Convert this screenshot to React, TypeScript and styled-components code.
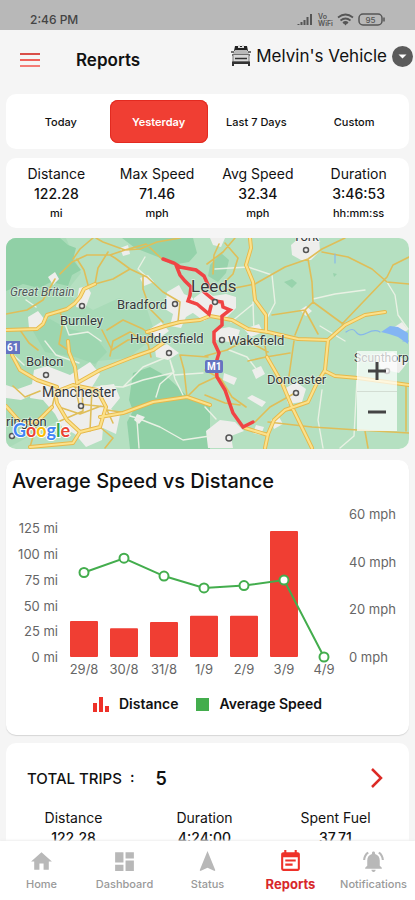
import React from 'react';
import styled, { createGlobalStyle, css } from 'styled-components';
import { MdHome, MdDashboard, MdNavigation, MdEventNote, MdNotificationsActive } from 'react-icons/md';

const red = '#f03e33';
const green = '#43ad4d';

const GlobalStyle = createGlobalStyle`
  * { box-sizing: border-box; }
  body { margin: 0; background: #f5f5f5; color: #111; font-family: Inter, "Open Sans", sans-serif; }
  button { font: inherit; color: inherit; border: 0; padding: 0; background: none; cursor: pointer; }
  h1, h2, p, dl, dd { margin: 0; }
`;

const Screen = styled.div`
  display: flex;
  flex-direction: column;
  height: 100vh;
  overflow: hidden;
`;

const StatusBar = styled.div`
  flex: none;
  display: flex;
  align-items: center;
  justify-content: space-between;
  height: 30px;
  padding: 8px 29px 0 30px;
  background: #b8b8b8;
  color: #444;
  font-size: 12px;
  font-weight: 500;
`;

const Header = styled.header`
  flex: none;
  display: flex;
  align-items: center;
  height: 60px;
  padding: 0 2px 0 20px;
`;

const MenuButton = styled.button`
  display: flex;
  margin-right: 36px;
`;

const PageTitle = styled.h1`
  font-size: 17px;
  font-weight: 600;
  line-height: 24px;
`;

const VehicleButton = styled.button`
  display: flex;
  align-items: center;
  gap: 5px;
  margin: 0 0 8px auto;
  font-size: 17px;
  line-height: 24px;
  white-space: nowrap;
`;

const Content = styled.main`
  flex: 1;
  min-height: 0;
  overflow-y: auto;
  scrollbar-width: none;
  display: flex;
  flex-direction: column;
  padding: 4px 6px 0;
`;

const Card = styled.section`
  flex: none;
  background: #fff;
  border-radius: 10px;
`;

const Tabs = styled(Card)`
  display: grid;
  grid-template-columns: repeat(4, 1fr);
  padding: 6px 6px;
  margin-bottom: 9px;
`;

const Tab = styled.button<{ $active?: boolean }>`
  height: 43px;
  border-radius: 8px;
  font-size: 11px;
  font-weight: 500;
  white-space: nowrap;
  ${(p) => p.$active && css`
    background: ${red};
    box-shadow: inset 0 0 0 1px #e32a20;
    color: #fff;
    font-weight: 600;
  `}
`;

const Summary = styled(Card)`
  margin-bottom: 10px;
  padding: 5px 0 5px;
`;

const StatGrid = styled.dl<{ $columns: number }>`
  display: grid;
  grid-template-columns: repeat(${(p) => p.$columns}, 1fr);
  text-align: center;
`;

const StatLabel = styled.dt`
  font-size: 14px;
  line-height: 21px;
`;

const StatValue = styled.dd`
  font-size: 14px;
  font-weight: 500;
  line-height: 20px;
`;

const StatUnit = styled.dd`
  font-size: 11px;
  font-weight: 500;
  line-height: 19px;
`;

const MapCard = styled(Card)`
  position: relative;
  overflow: hidden;
  margin-bottom: 11px;
`;

const MapDrawing = styled.svg`
  display: block;
  width: 100%;
  height: auto;
`;

const ZoomControl = styled.div`
  position: absolute;
  right: 12px;
  bottom: 18px;
  display: flex;
  flex-direction: column;
  width: 40px;
  background: rgba(255, 255, 255, 0.72);
`;

const ZoomButton = styled.button`
  display: grid;
  place-items: center;
  height: 40px;
  & + & { border-top: 1px solid #d3ddd3; }
`;

const ChartCard = styled(Card)`
  margin-bottom: 8px;
  padding-bottom: 21px;
  box-shadow: 0 1px 1px #d6d6d6;
  svg { display: block; }
`;

const CardTitle = styled.h2`
  padding: 7px 6px 1px;
  font-size: 20px;
  font-weight: 500;
  line-height: 28px;
`;

const Plot = styled.svg`
  width: 100%;
  height: auto;
  text { font-size: 13px; fill: #666; }
`;

const Legend = styled.div`
  display: flex;
  justify-content: center;
  gap: 18px;
  padding-top: 8px;
  font-size: 14px;
  font-weight: 600;
  line-height: 20px;
`;

const LegendItem = styled.span`
  display: flex;
  align-items: center;
  gap: 10px;
`;

const Swatch = styled.i`
  width: 13px;
  height: 13px;
  background: ${green};
`;

const TripsCard = styled(Card)`
  padding-bottom: 24px;
`;

const TripsButton = styled.button`
  display: flex;
  align-items: center;
  width: 100%;
  height: 64px;
  padding: 6px 26px 0 21px;
  font-size: 15px;
  font-weight: 500;
  svg { margin-left: auto; }
`;

const TripCount = styled.span`
  margin-left: 21px;
  font-size: 18px;
  font-weight: 600;
`;

const TripStats = styled.div`
  padding: 0 8px 0 2px;
`;

const BottomNav = styled.nav`
  flex: none;
  display: grid;
  grid-template-columns: repeat(5, 1fr);
  height: 59px;
  background: #fff;
  box-shadow: 0 -1px 2px #eee;
`;

const NavLink = styled.a<{ $active?: boolean }>`
  display: flex;
  flex-direction: column;
  align-items: center;
  padding-top: 8px;
  color: ${(p) => (p.$active ? '#d8272b' : '#999')};
  font-size: ${(p) => (p.$active ? 13 : 11)}px;
  font-weight: ${(p) => (p.$active ? 700 : 500)};
  line-height: 20px;
  text-decoration: none;
  svg { flex: none; color: ${(p) => (p.$active ? '#ee3129' : '#b8b8b8')}; }
`;

const StatusIcons = () => (
  <svg width="89" height="15" viewBox="0 0 89 15" fill="none" stroke="#555" aria-hidden="true">
    <path d="M1.500 13v-1M4.500 13v-3M7.500 13V8M10.500 13V5M14 13V2" strokeWidth="2" />
    <text x="21" y="7" fontSize="7" fontWeight="600" fill="#555" stroke="none">Vo</text>
    <text x="21" y="14" fontSize="7" fontWeight="600" fill="#555" stroke="none">WiFi</text>
    <path d="M41 5.500q7.500-6 15 0M43.500 8.500q5-4 10 0M46 11q2.500-2 5 0" strokeWidth="1.700" />
    <path d="M46.500 11h4l-2 2.500z" fill="#555" stroke="none" />
    <rect x="62" y="2" width="23" height="11" rx="4" strokeWidth="1.500" />
    <path d="M87 5.500v4" strokeWidth="1.500" />
    <text x="73.500" y="10.500" fontSize="8" textAnchor="middle" fill="#555" stroke="none">95</text>
  </svg>
);

const VehicleIcon = () => (
  <svg width="20" height="22" viewBox="0 0 20 22" aria-hidden="true">
    <path d="M4 1h12l1 5H3z" fill="#222" />
    <path d="M7 0h2v2h2V0h2v3H7z" fill="#ddd" />
    <path d="M4 5h12l2 4H2z" fill="#b9b9b9" />
    <path d="M0 7h3M17 7h3M1 10h18M3 13h14" stroke="#444" strokeWidth="1.500" />
    <path d="M2 10v7h16v-7" fill="#d8d8d8" stroke="#777" />
    <path d="M4 13.500h12" stroke="#333" strokeWidth="1.500" />
    <path d="M1 16.500h18V21h-2v-2H3v2H1z" fill="#333" />
  </svg>
);

type RoadProps = { d: string[] };

const MinorRoads = ({ d }: RoadProps) => (
  <path d={d.join('')} stroke="#dfbe59" strokeWidth="1.600" />
);

const MajorRoads = ({ d }: RoadProps) => (
  <>
    <path d={d.join('')} stroke="#e6b84a" strokeWidth="4" />
    <path d={d.join('')} stroke="#fce18a" strokeWidth="2.200" />
  </>
);

const majorRoads = [
  'M6 330L37 329L43 324L47 315L67 309L75 303L80 297L84 289L95 284',
  'M147 332L165 326L180 322L200 320L210 316L232 320L248 329L268 332L298 339L328 340L345 325L365 315L385 312',
  'M250 238L251 248L246 265L253 282L255 300L266 315L266 332',
  'M12 355L20 370L37 380L57 387', 'M68 341L69 352L75 367L77 383L100 370L133 357L153 350L163 343',
  'M100 417L123 413L153 402L187 397L210 405',
  'M57 403L67 420L80 432L100 427L106 407L97 390L73 385L55 392L57 403',
  'M265 448L268 434L274 420L285 410L308 402L317 383L325 370L328 340',
  'M267 357L282 383L292 407L312 448', 'M325 371L335 376L358 378L409 385', 'M6 406L22 424L38 421L52 407',
  'M30 447L73 443L80 432', 'M245 428L268 435',
];

const minorRoads = [
  'M60 274L72 262L87 255L110 255L125 250L140 249L157 242L180 238', 'M55 279L43 300L27 310L6 314',
  'M73 259L80 249L93 238', 'M77 259L84 270L88 285', 'M125 250L103 242L96 238', 'M95 284L98 268L108 252',
  'M95 284L113 279L130 269L115 258L110 255', 'M130 269L147 277L163 292L180 302L178 322', 'M60 312L63 322L59 344L68 350',
  'M107 330L123 320L143 329L153 337', 'M143 275L143 289L150 309L163 322', 'M125 250L146 244L162 259',
  'M20 330L29 343L38 350', 'M102 330L112 350L128 340L151 337',
  'M225 290L255 284L285 267L308 259L322 249L345 238', 'M308 259L312 282L313 302L343 324', 'M322 252L348 257L372 269L387 282L409 284',
  'M342 324L387 277L393 265L409 257', 'M272 315L305 310L313 302', 'M305 310L295 335', 'M305 310L318 334',
  'M207 264L223 252L235 238', 'M225 243L238 258L233 274L221 286', 'M213 274L214 255L219 244',
  'M110 356L113 341L130 332L148 344L151 357', 'M187 397L184 370L180 355L208 357', 'M105 448L113 438L100 427', 'M30 447L37 423L52 407L57 387',
  'M113 423L107 410L127 413', 'M75 386L79 404L107 407', 'M60 421L83 411L82 390', 'M13 386L25 397L40 391',
  'M205 395L225 403L240 405', 'M255 422L270 407L295 393', 'M268 422L312 427L358 430L409 433', 'M406 386L406 431',
  'M365 431L368 448', 'M267 357L264 340', 'M248 361L266 357L290 353', 'M289 376L294 341', 'M205 370L221 379L232 397L246 407',
  'M205 356L227 350L246 340L268 352', 'M187 397L199 385L216 377', 'M62 408L80 414L101 406M92 388L90 431',
];

const whiteRoads =
  'M215 269L248 267L272 275L275 303L266 320M313 299L335 294L365 290M387 282L395 295L398 315L408 329M320 326L345 341M65 324L69 335L88 332L101 341M137 418L160 427L183 440L210 436M123 387L143 367L167 357M156 397L160 384L174 372L170 360M170 360L175 379L183 395M174 375L203 373M137 420L139 448M322 390L318 420L323 448M358 360L354 436L340 448M205 407L216 419M130 416L137 418M6 348L24 365M45 341L56 355L79 363M101 386L123 387L143 380L172 373M231 322L253 304M229 350L247 357L257 370M145 257L138 269L149 279M26 300L36 307M253 302L254 334';

const places: Array<[string, number, number, number, number, number]> = [
  ['Burnley', 60, 325, 13, 82, 306],
  ['Bradford', 117, 309, 13, 175, 304],
  ['Huddersfield', 130, 343, 13, 169, 353],
  ['Leeds', 191, 292, 17, 215, 302],
  ['Wakefield', 228, 345, 13, 222, 340],
  ['York', 293, 241, 13, 306, 250],
  ['Bolton', 26, 366, 13, 46, 375],
  ['Manchester', 42, 397, 14, 81, 406],
  ['rington', 6, 426, 13, 12, 436],
  ['Doncaster', 267, 384, 13, 296, 393],
  ['Scunthorpe', 354, 362, 12, 387, 371],
];

const RouteMap = () => (
  <MapDrawing viewBox="6 238 403 211" fontFamily="Roboto, sans-serif" role="img" aria-label="Map of the route around Leeds">
    <path d="M6 238h403v211H6z" fill="#b5e0c1" />
    <path d="M6 238h60l15 35-16 20 28 17 26-12 27 8 10 30-28 22-30 3-22 50-70 38z" fill="#a9dbb8" />
    <path d="M6 238h54l8 7 8 3-3 12 8 10-9 5-4 11-17-4-12 6-16-4-17 7z" fill="#90d0a6" />
    <path d="M122 238h71l4 15-8 9-17 3-14-8-23-9z" fill="#94d2aa" />
    <path d="M133 373l17-6 16 9 12 11 10 10 22 10v42h-80l-3-27 6-11-4-11z" fill="#90d0a6" />
    <path d="M30 326l20-7 16 9 28 7 13 17-12 12-20-7-30-5z" fill="#9dd6b0" />
    <path d="M210 265l11-12 8 7-3 13-8 9-10-6zM284 282l8-3 5 4-5 5zM333 273l4 1-3 3z" fill="#98d3ac" />
    <g fill="#eeeeec">
      <path d="M48 277l7-5 4 7-6 6zM120 248l8-3 2 9-7 2zM140 278l8-3 6 7-10 4zM167 292l12-7 5 9 9 4 3 13-10 6-5 11-11-2 3-12-8-5zM194 298l11-8 8 6 13-2 10 3v11l-10 10-12-3-10 6-11-8z" />
      <path d="M28 317l10-6 7 9-6 10-10-2zM79 288l8-2 4 7-6 16-9-2zM148 330l13-8 8 9-11 8zM291 245l8-7h20l1 13-9 9h-10l-9-5zM210 238h15l-4 9-8-2zM213 330l16-3 11 3-4 13-20-3zM244 329l15-5 4 8-12 5zM300 310l6-4 6 5-6 5z" />
      <path d="M34 370l13-4 23 9 20-13 10 12-8 13 22-3 6 14-9 11 9 6-4 19-13-6-1 12-16 7-11-13-13-7-7-13-12-14-13-2zM155 349l12-5 12 9-11 7-12-3zM6 385l12 4 14-5 5 9-16 7-15-2z" />
      <path d="M206 431l14-11 15 2 9 9-13 5 2 12h-25zM252 395l14 7-4 5-15-9zM224 373l13 5-3 7-11-5zM284 389l12-7 10 7-4 13-14 2zM271 420l8-3 4 7-9 5zM376 355l17-3 15 10-9 11-18-4zM393 328l9-6 6 8-9 5zM252 370l9-4 4 8-9 5zM137 414l8 3-6 7-5-4zM256 425l8 2-3 8-8-2z" />
    </g>
    <g fill="none" strokeLinejoin="round" strokeLinecap="round">
      <path d={whiteRoads} stroke="#e9f1e4" strokeWidth="1.400" />
      <MinorRoads d={minorRoads} />
      <MajorRoads d={majorRoads} />
      <path d="M346 332q7-5 10 0t11 1 13-1M335 254v9M403 341h6" stroke="#86b7eb" strokeWidth="1.200" />
      <path d="M381 332l9-6 8 1 10 6v11l-10-7-9-3z" fill="#83b5f3" />
      <path
        d="M163 259L174 263L180 267L196 270L204 276L209 287M176 265L180 275L185 281L191 287L190 295L188 301L197 304L209 314L211 306M204 292L215 301L222 302L223 307L230 310L222 316L222 325L214 332L214 342L219 353L216 363L217 377L225 390L233 413L243 427L253 422"
        stroke="#f04444"
        strokeWidth="3.500"
        strokeLinejoin="miter"
      />
    </g>
    <g fill="#eee" stroke="#555" strokeWidth="1.500">
      {places.map(([name, , , , cx, cy]) => <circle key={name} cx={cx} cy={cy} r="2.500" />)}
      <circle cx="229" cy="438" r="3" />
    </g>
    <g fill="#35393b" stroke="#fff" strokeWidth="1.500" strokeOpacity="0.500" paintOrder="stroke">
      {places.map(([name, x, y, size]) => <text key={name} x={x} y={y} fontSize={size}>{name}</text>)}
      <text x="10" y="296" fontSize="12" fontStyle="italic" fill="#505858">Great Britain</text>
    </g>
    <g fill="#fff" fontSize="10" fontWeight="700">
      <rect x="6" y="341" width="14" height="13" fill="#6574c1" />
      <text x="7" y="351">61</text>
      <rect x="205" y="360" width="18" height="13" rx="2" fill="#6574c1" />
      <text x="207" y="370">M1</text>
    </g>
    <text x="13" y="437" fontFamily="Lato, sans-serif" fontSize="18" fontWeight="700" stroke="#fff" strokeWidth="2" paintOrder="stroke">
      <tspan fill="#4285f4">G</tspan><tspan fill="#ea4335">o</tspan><tspan fill="#fbbc05">o</tspan><tspan fill="#4285f4">g</tspan><tspan fill="#34a853">l</tspan><tspan fill="#ea4335">e</tspan>
    </text>
  </MapDrawing>
);

const days = [
  { label: '29/8', miles: 35, mph: 35.5 },
  { label: '30/8', miles: 28, mph: 41.5 },
  { label: '31/8', miles: 34, mph: 34 },
  { label: '1/9', miles: 40, mph: 29 },
  { label: '2/9', miles: 40, mph: 30 },
  { label: '3/9', miles: 122.28, mph: 32.34 },
  { label: '4/9', miles: 0, mph: 0 },
];

const BASE = 161;
const dayX = (i: number) => 78 + i * 40;
const milesY = (v: number) => BASE - v * 1.03;
const mphY = (v: number) => BASE - v * 2.38;

const SpeedChart = () => (
  <Plot viewBox="0 0 403 190" role="img" aria-label="Average speed and distance by day">
    {[0, 25, 50, 75, 100, 125].map((v) => (
      <text key={v} x="52" y={milesY(v) + 5} textAnchor="end">{v} mi</text>
    ))}
    {[0, 20, 40, 60].map((v) => <text key={v} x="343" y={mphY(v) + 5}>{v} mph</text>)}
    {days.map((d, i) => (
      <g key={d.label}>
        {d.miles > 0 && <rect x={dayX(i) - 14} y={milesY(d.miles)} width="28" height={BASE - milesY(d.miles)} rx="1" fill={red} />}
        <text x={dayX(i)} y={BASE + 17} textAnchor="middle">{d.label}</text>
      </g>
    ))}
    <g stroke={green} fill="#fff" strokeWidth="2">
      <polyline points={days.map((d, i) => `${dayX(i)},${mphY(d.mph)}`).join(' ')} fill="none" />
      {days.map((d, i) => <circle key={d.label} cx={dayX(i)} cy={mphY(d.mph)} r="4.500" />)}
    </g>
  </Plot>
);

const stats = [
  ['Distance', '122.28', 'mi'],
  ['Max Speed', '71.46', 'mph'],
  ['Avg Speed', '32.34', 'mph'],
  ['Duration', '3:46:53', 'hh:mm:ss'],
];

const trips = [['Distance', '122.28'], ['Duration', '4:24:00'], ['Spent Fuel', '37.71']];

const navItems = [
  { label: 'Home', Icon: MdHome },
  { label: 'Dashboard', Icon: MdDashboard },
  { label: 'Status', Icon: MdNavigation },
  { label: 'Reports', Icon: MdEventNote },
  { label: 'Notifications', Icon: MdNotificationsActive },
];

export default function App() {
  return (
    <Screen>
      <GlobalStyle />
      <StatusBar>
        <span>2:46 PM</span>
        <StatusIcons />
      </StatusBar>
      <Header>
        <MenuButton aria-label="Menu">
          <svg width="20" height="16" viewBox="0 0 20 16" strokeWidth="2" aria-hidden="true">
            <path d="M0 2h20" stroke="#d94f49" />
            <path d="M0 8h20" stroke="#f0625b" />
            <path d="M0 14h20" stroke="#f47c75" />
          </svg>
        </MenuButton>
        <PageTitle>Reports</PageTitle>
        <VehicleButton aria-haspopup="listbox">
          <VehicleIcon />
          Melvin's Vehicle
          <svg width="21" height="21" viewBox="0 0 21 21" aria-hidden="true">
            <circle cx="10.500" cy="10.500" r="10.500" fill="#5b5b5b" />
            <path d="M6.500 8.500h8l-4 4z" fill="#fff" />
          </svg>
        </VehicleButton>
      </Header>
      <Content>
        <Tabs aria-label="Period">
          {['Today', 'Yesterday', 'Last 7 Days', 'Custom'].map((name) => (
            <Tab key={name} $active={name === 'Yesterday'} aria-pressed={name === 'Yesterday'}>{name}</Tab>
          ))}
        </Tabs>
        <Summary>
          <StatGrid $columns={4}>
            {stats.map(([label, value, unit]) => (
              <div key={label}>
                <StatLabel>{label}</StatLabel>
                <StatValue>{value}</StatValue>
                <StatUnit>{unit}</StatUnit>
              </div>
            ))}
          </StatGrid>
        </Summary>
        <MapCard>
          <RouteMap />
          <ZoomControl>
            <ZoomButton aria-label="Zoom in">
              <svg viewBox="0 0 18 18" width="18" height="18" aria-hidden="true"><path d="M0 9h18M9 0v18" stroke="#444" strokeWidth="3" /></svg>
            </ZoomButton>
            <ZoomButton aria-label="Zoom out">
              <svg viewBox="0 0 18 18" width="18" height="18" aria-hidden="true"><path d="M0 9h18" stroke="#444" strokeWidth="3" /></svg>
            </ZoomButton>
          </ZoomControl>
        </MapCard>
        <ChartCard>
          <CardTitle>Average Speed vs Distance</CardTitle>
          <SpeedChart />
          <Legend>
            <LegendItem>
              <svg width="16" height="16" viewBox="0 0 16 16" fill="#ee3129" aria-hidden="true">
                <path d="M0 7h4v9H0zM6 1h4v15H6zM12 10h4v6h-4z" />
              </svg>
              Distance
            </LegendItem>
            <LegendItem>
              <Swatch />
              Average Speed
            </LegendItem>
          </Legend>
        </ChartCard>
        <TripsCard>
          <TripsButton>
            TOTAL TRIPS&nbsp; :
            <TripCount>5</TripCount>
            <svg width="12" height="20" viewBox="0 0 12 20" fill="none" stroke="#dc2a25" strokeWidth="2.500" aria-hidden="true">
              <path d="M1 1l9 9-9 9" />
            </svg>
          </TripsButton>
          <TripStats>
            <StatGrid $columns={3}>
              {trips.map(([label, value]) => (
                <div key={label}>
                  <StatLabel>{label}</StatLabel>
                  <StatValue>{value}</StatValue>
                </div>
              ))}
            </StatGrid>
          </TripStats>
        </TripsCard>
      </Content>
      <BottomNav aria-label="Main">
        {navItems.map(({ label, Icon }) => (
          <NavLink key={label} href={`#${label.toLowerCase()}`} $active={label === 'Reports'}>
            <Icon size={25} aria-hidden="true" />
            {label}
          </NavLink>
        ))}
      </BottomNav>
    </Screen>
  );
}
